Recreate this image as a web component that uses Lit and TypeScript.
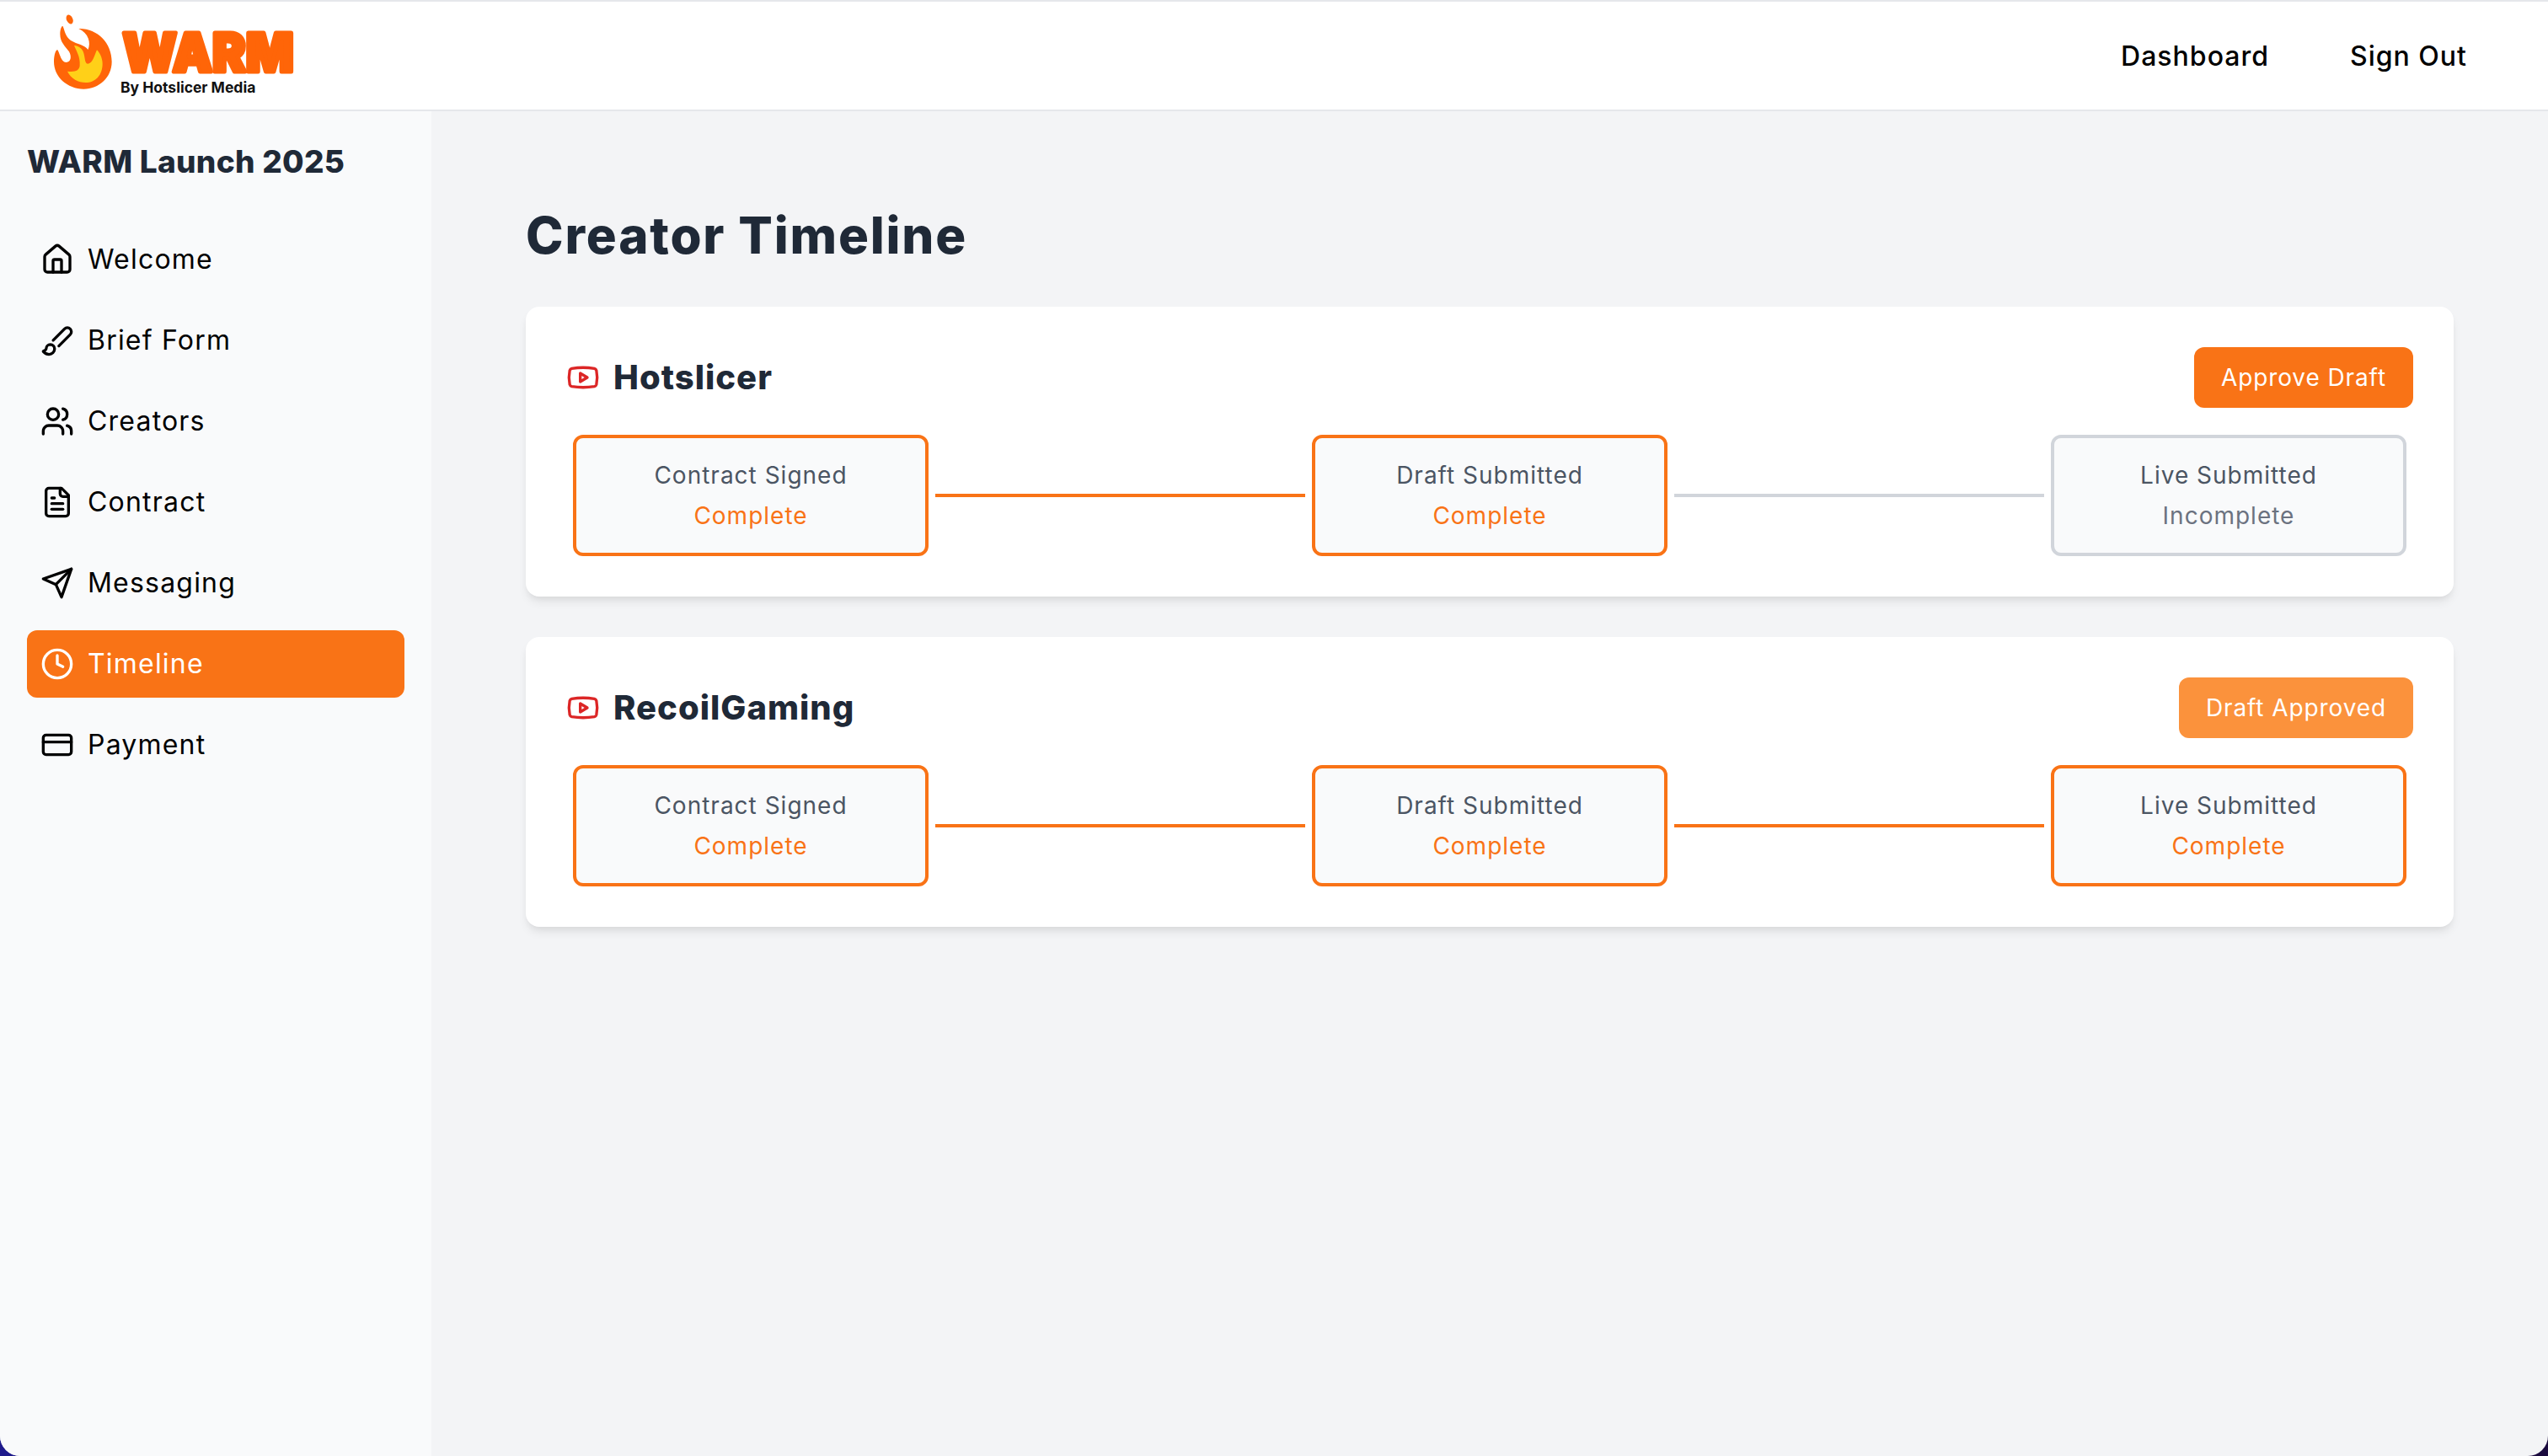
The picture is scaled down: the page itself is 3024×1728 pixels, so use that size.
import { LitElement, html, css, svg } from "lit";
import { customElement } from "lit/decorators.js";

const icons: Record<string, unknown> = {
  home: svg`<path d="M15 21v-8a1 1 0 0 0-1-1h-4a1 1 0 0 0-1 1v8"/><path d="M3 10a2 2 0 0 1 .709-1.528l7-5.999a2 2 0 0 1 2.582 0l7 5.999A2 2 0 0 1 21 10v9a2 2 0 0 1-2 2H5a2 2 0 0 1-2-2z"/>`,
  brush: svg`<path d="m9.06 11.9 8.07-8.06a2.85 2.85 0 1 1 4.03 4.03l-8.06 8.08"/><path d="M7.07 14.94c-1.66 0-3 1.35-3 3.02 0 1.33-2.5 1.52-2 2.02 1.08 1.1 2.49 2.02 4 2.02 2.2 0 4-1.8 4-4.04a3.01 3.01 0 0 0-3-3.02z"/>`,
  users: svg`<path d="M16 21v-2a4 4 0 0 0-4-4H6a4 4 0 0 0-4 4v2"/><circle cx="9" cy="7" r="4"/><path d="M22 21v-2a4 4 0 0 0-3-3.87"/><path d="M16 3.13a4 4 0 0 1 0 7.75"/>`,
  file: svg`<path d="M15 2H6a2 2 0 0 0-2 2v16a2 2 0 0 0 2 2h12a2 2 0 0 0 2-2V7Z"/><path d="M14 2v4a2 2 0 0 0 2 2h4"/><path d="M10 9H8"/><path d="M16 13H8"/><path d="M16 17H8"/>`,
  send: svg`<path d="m22 2-7 20-4-9-9-4Z"/><path d="M22 2 11 13"/>`,
  clock: svg`<circle cx="12" cy="12" r="10"/><polyline points="12 6 12 12 16 14"/>`,
  card: svg`<rect width="20" height="14" x="2" y="5" rx="2"/><line x1="2" x2="22" y1="10" y2="10"/>`,
  youtube: svg`<path d="M2.5 17a24.12 24.12 0 0 1 0-10 2 2 0 0 1 1.4-1.4 49.56 49.56 0 0 1 16.2 0A2 2 0 0 1 21.5 7a24.12 24.12 0 0 1 0 10 2 2 0 0 1-1.4 1.4 49.55 49.55 0 0 1-16.2 0A2 2 0 0 1 2.5 17"/><path d="m10 15 5-3-5-3z"/>`,
};

const icon = (name: string) => html`<svg class="icon" viewBox="0 0 24 24" fill="none" stroke="currentColor" stroke-width="2" stroke-linecap="round" stroke-linejoin="round">${icons[name]}</svg>`;

const navItems = [
  { label: "Welcome", icon: "home" },
  { label: "Brief Form", icon: "brush" },
  { label: "Creators", icon: "users" },
  { label: "Contract", icon: "file" },
  { label: "Messaging", icon: "send" },
  { label: "Timeline", icon: "clock", active: true },
  { label: "Payment", icon: "card" },
];

const creators = [
  { name: "Hotslicer", action: "Approve Draft", approved: false, steps: [["Contract Signed", true], ["Draft Submitted", true], ["Live Submitted", false]] },
  { name: "RecoilGaming", action: "Draft Approved", approved: true, steps: [["Contract Signed", true], ["Draft Submitted", true], ["Live Submitted", true]] },
];

@customElement("app-root")
export class AppRoot extends LitElement {
  static styles = css`
    :host {
      display: block;
      height: 1728px;
      background: linear-gradient(to right, #1f1b8c, #1a0a3e);
      font-family: Inter, "Noto Sans", sans-serif;
      color: #000;
    }

    * { box-sizing: border-box; }

    .shell {
      height: 1728px;
      display: flex;
      flex-direction: column;
      border-radius: 0 0 24px 24px;
      overflow: hidden;
      background: #f3f4f6;
    }

    header {
      height: 132px;
      flex: none;
      display: flex;
      align-items: center;
      justify-content: space-between;
      background: #fff;
      border-top: 2px solid #e5e7eb;
      border-bottom: 2px solid #e5e7eb;
      padding: 0 96px 0 60px;
    }

    .logo { display: flex; align-items: flex-start; gap: 4px; margin-top: -2px; }
    .flame { width: 76px; height: 96px; display: block; }
    .wordmark { display: flex; flex-direction: column; padding-top: 20px; }
    .warm { width: 214px; height: 56px; display: block; overflow: visible; }
    .warm text {
      font-family: Inter, sans-serif;
      font-weight: 900;
      font-size: 63px;
      fill: #ff6508;
      stroke: #ff6508;
      stroke-width: 5px;
      stroke-linejoin: round;
    }
    .by {
      font-weight: 700;
      font-size: 17.5px;
      line-height: 24px;
      color: #111;
      margin: 2px 0 0 3px;
      white-space: nowrap;
    }

    .top-links { display: flex; gap: 96px; font-size: 32px; font-weight: 500; letter-spacing: 1px; }

    .body { flex: 1; display: flex; min-height: 0; }

    aside {
      width: 512px;
      flex: none;
      background: #f9fafb;
      padding: 32px;
    }

    .project {
      font-size: 37px;
      line-height: 56px;
      font-weight: 800;
      letter-spacing: 0.3px;
      color: #1f2937;
      margin: 0 0 48px;
      white-space: nowrap;
    }

    nav { display: flex; flex-direction: column; gap: 16px; }

    .nav-item {
      height: 80px;
      display: flex;
      align-items: center;
      gap: 16px;
      padding: 0 16px;
      border-radius: 12px;
      font-size: 32px;
      line-height: 78px;
      letter-spacing: 1.2px;
      color: #000;
    }
    .nav-item.active { background: #f97316; color: #fff; }

    .icon { width: 40px; height: 40px; flex: none; display: block; }

    main { flex: 1; min-width: 0; padding: 112px; }

    h1 {
      font-size: 60px;
      line-height: 70px;
      font-weight: 800;
      letter-spacing: 1.8px;
      color: #1f2937;
      margin: 0 0 50px;
    }

    .cards { display: flex; flex-direction: column; gap: 48px; }

    .card {
      background: #fff;
      border-radius: 16px;
      padding: 48px;
      box-shadow: 0 8px 12px -2px rgba(0, 0, 0, 0.08), 0 4px 8px -4px rgba(0, 0, 0, 0.08);
    }

    .card-head {
      display: flex;
      align-items: center;
      justify-content: space-between;
      margin-bottom: 32px;
    }

    .creator { display: flex; align-items: center; gap: 16px; color: #dc2626; }
    .creator h2 {
      font-size: 40px;
      line-height: 56px;
      font-weight: 800;
      letter-spacing: 1px;
      color: #1f2937;
      margin: 0;
    }

    .action {
      height: 72px;
      padding: 0 32px;
      display: flex;
      align-items: center;
      border-radius: 12px;
      background: #f97316;
      color: #fff;
      font-size: 28px;
      letter-spacing: 0.9px;
    }
    .action.done { background: #fb923c; }

    .steps { display: flex; align-items: center; padding: 0 8px; }

    .step {
      flex: 0 0 422px;
      height: 144px;
      padding: 20px 0;
      border: 4px solid #d1d5db;
      border-radius: 12px;
      background: #f9fafb;
      text-align: center;
      font-size: 28px;
      line-height: 48px;
      letter-spacing: 1px;
      color: #4b5563;
    }
    .step.on { border-color: #f97316; }

    .status { color: #6b7280; }
    .step.on .status { color: #f97316; }

    .line { flex: 1; height: 4px; margin: 0 8px; background: #d1d5db; }
    .line.on { background: #f97316; }
  `;

  private renderSteps(steps: (string | boolean)[][]) {
    return steps.map(([label, done], i) => html`
      ${i > 0 ? html`<div class="line ${done ? "on" : ""}"></div>` : ""}
      <div class="step ${done ? "on" : ""}">
        <div>${label}</div>
        <div class="status">${done ? "Complete" : "Incomplete"}</div>
      </div>
    `);
  }

  render() {
    return html`
      <div class="shell">
        <header>
          <div class="logo">
            <svg class="flame" viewBox="0 0 228 288">
              <ellipse cx="68" cy="27" rx="11" ry="17" transform="rotate(-25 68 27)" fill="#ff6508"/>
              <path fill="#ff6508" d="M100 60C165 58 218 110 218 178C218 235 172 275 118 275C60 275 12 232 12 178C12 160 16 138 24 135C32 142 36 180 56 180C72 180 76 160 66 142C52 122 34 108 34 80C34 62 40 48 44 52C50 65 52 88 72 102C95 116 122 118 133 135C145 112 135 75 100 60Z"/>
              <path fill="#ffd018" d="M84 120C92 140 106 160 104 190C104 210 85 216 60 212C72 238 100 252 125 252C160 252 185 225 185 185C185 165 175 145 165 136C158 150 150 185 133 185C118 185 126 150 110 132C102 124 92 120 84 120Z"/>
            </svg>
            <div class="wordmark">
              <svg class="warm" viewBox="0 0 214 56"><text x="5.5" y="51" textLength="203" lengthAdjust="spacingAndGlyphs">WARM</text></svg>
              <div class="by">By Hotslicer Media</div>
            </div>
          </div>
          <div class="top-links"><span>Dashboard</span><span>Sign Out</span></div>
        </header>
        <div class="body">
          <aside>
            <h3 class="project">WARM Launch 2025</h3>
            <nav>
              ${navItems.map((n) => html`
                <div class="nav-item ${n.active ? "active" : ""}">${icon(n.icon)}<span>${n.label}</span></div>
              `)}
            </nav>
          </aside>
          <main>
            <h1>Creator Timeline</h1>
            <div class="cards">
              ${creators.map((c) => html`
                <section class="card">
                  <div class="card-head">
                    <div class="creator">${icon("youtube")}<h2>${c.name}</h2></div>
                    <div class="action ${c.approved ? "done" : ""}">${c.action}</div>
                  </div>
                  <div class="steps">${this.renderSteps(c.steps)}</div>
                </section>
              `)}
            </div>
          </main>
        </div>
      </div>
    `;
  }
}
